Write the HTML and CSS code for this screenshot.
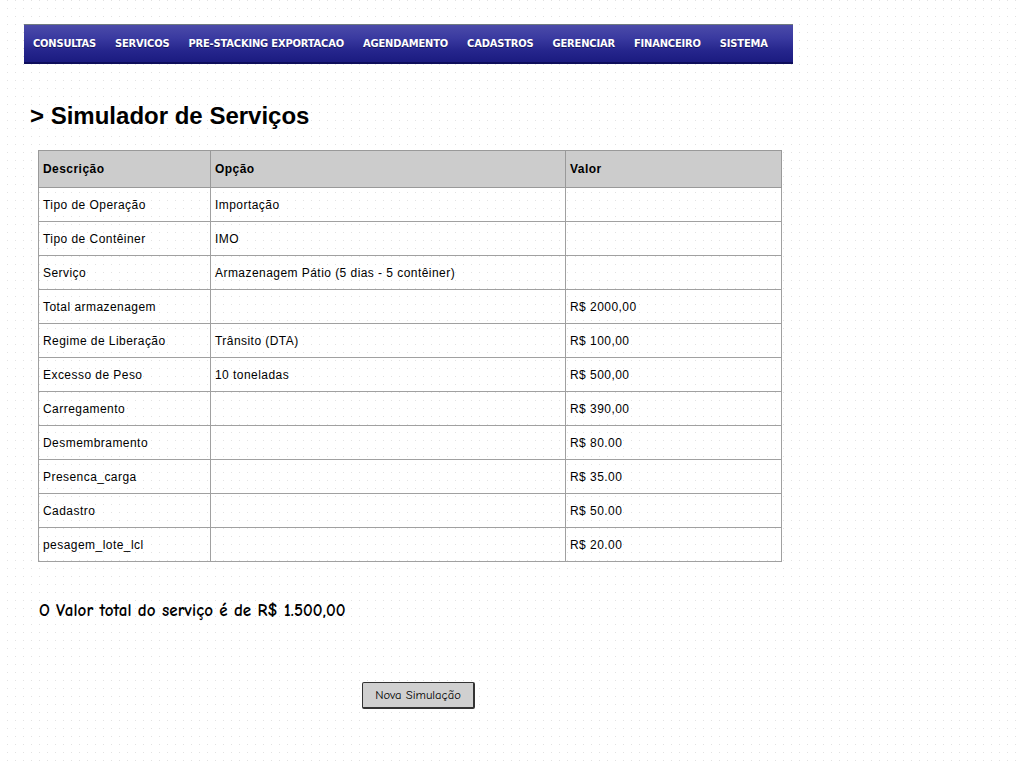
FILE: index.html
```html
<!DOCTYPE html>
<html lang="pt">
<head>
<meta charset="utf-8">
<title>Simulador de Serviços</title>
<link rel="stylesheet" href="styles.css">
</head>
<body>
<nav class="menu">
  <a class="menu-item">CONSULTAS</a>
  <a class="menu-item">SERVICOS</a>
  <a class="menu-item">PRE-STACKING EXPORTACAO</a>
  <a class="menu-item">AGENDAMENTO</a>
  <a class="menu-item">CADASTROS</a>
  <a class="menu-item">GERENCIAR</a>
  <a class="menu-item">FINANCEIRO</a>
  <a class="menu-item">SISTEMA</a>
</nav>
<h1 class="title">&gt; Simulador de Serviços</h1>
<table class="sim">
  <colgroup><col class="c1"><col class="c2"><col class="c3"></colgroup>
  <thead>
    <tr><th>Descrição</th><th>Opção</th><th>Valor</th></tr>
  </thead>
  <tbody>
    <tr><td>Tipo de Operação</td><td>Importação</td><td></td></tr>
    <tr><td>Tipo de Contêiner</td><td>IMO</td><td></td></tr>
    <tr><td>Serviço</td><td>Armazenagem Pátio (5 dias - 5 contêiner)</td><td></td></tr>
    <tr><td>Total armazenagem</td><td></td><td>R$ 2000,00</td></tr>
    <tr><td>Regime de Liberação</td><td>Trânsito (DTA)</td><td>R$ 100,00</td></tr>
    <tr><td>Excesso de Peso</td><td>10 toneladas</td><td>R$ 500,00</td></tr>
    <tr><td>Carregamento</td><td></td><td>R$ 390,00</td></tr>
    <tr><td>Desmembramento</td><td></td><td>R$ 80.00</td></tr>
    <tr><td>Presenca_carga</td><td></td><td>R$ 35.00</td></tr>
    <tr><td>Cadastro</td><td></td><td>R$ 50.00</td></tr>
    <tr><td>pesagem_lote_lcl</td><td></td><td>R$ 20.00</td></tr>
  </tbody>
</table>
<p class="total">O Valor total do serviço é de R$ 1.500,00</p>
<div class="actions">
  <button class="btn" type="button">Nova Simulação</button>
</div>
</body>
</html>
```

FILE: styles.css
```css
html, body {
  margin: 0;
  padding: 0;
}
body {
  width: 1022px;
  height: 765px;
  overflow: hidden;
  background-color: #ffffff;
  background-image: url("data:image/svg+xml,%3Csvg xmlns='http://www.w3.org/2000/svg' width='8' height='8'%3E%3Crect x='7' y='0' width='1' height='1' fill='%23e2e2e2'/%3E%3C/svg%3E");
  background-size: 8px 8px;
  font-family: "Liberation Sans", Arial, sans-serif;
  color: #000;
  padding-top: 24px;
  box-sizing: border-box;
}
.menu {
  margin-left: 24px;
  width: 769px;
  height: 40px;
  box-sizing: border-box;
  border-top: 1px solid #707a80;
  border-bottom: 2px solid #0e0e5c;
  background: linear-gradient(to bottom, #4b4ba9 0%, #3a3aa0 35%, #25258c 70%, #1b1b80 100%);
  display: flex;
  align-items: center;
  padding-left: 9px;
  gap: 19px;
}
.menu-item {
  font-family: "DejaVu Sans Condensed", "DejaVu Sans", sans-serif;
  font-weight: bold;
  font-size: 11px;
  color: #ffffff;
  text-shadow: 0 1px 0 rgba(0,0,40,0.6);
  letter-spacing: -0.15px;
  white-space: nowrap;
}
.title {
  font-family: "Liberation Sans", Arial, sans-serif;
  font-weight: bold;
  font-size: 24px;
  line-height: 28px;
  margin: 38px 0 0 30px;
}
.sim {
  margin: 20px 0 0 38px;
  border-collapse: collapse;
  width: 743px;
  table-layout: fixed;
  font-size: 12px;
  letter-spacing: 0.45px;
}
.c1 { width: 172px; }
.c2 { width: 355px; }
.c3 { width: 216px; }
.sim th, .sim td {
  border: 1px solid #a0a0a0;
  text-align: left;
  padding: 0 4px;
  white-space: nowrap;
}
.sim th {
  background: #cccccc;
  height: 36px;
  font-weight: bold;
  border-color: #999999;
}
.sim td {
  height: 33px;
}
.total {
  font-family: "Comic Sans MS", "Comic Neue", cursive;
  font-weight: bold;
  font-size: 17px;
  letter-spacing: 0.1px;
  margin: 39px 0 0 39px;
  line-height: 20px;
}
.actions {
  margin: 61px 0 0 362px;
}
.btn {
  width: 113px;
  height: 27px;
  background: #d0d0d0;
  border: 1px solid #333333;
  border-width: 1px 2px 2px 1px;
  border-radius: 2px;
  font-family: "Comic Sans MS", "Comic Neue", cursive;
  font-size: 12.6px;
  color: #000;
  padding: 0;
}
```
